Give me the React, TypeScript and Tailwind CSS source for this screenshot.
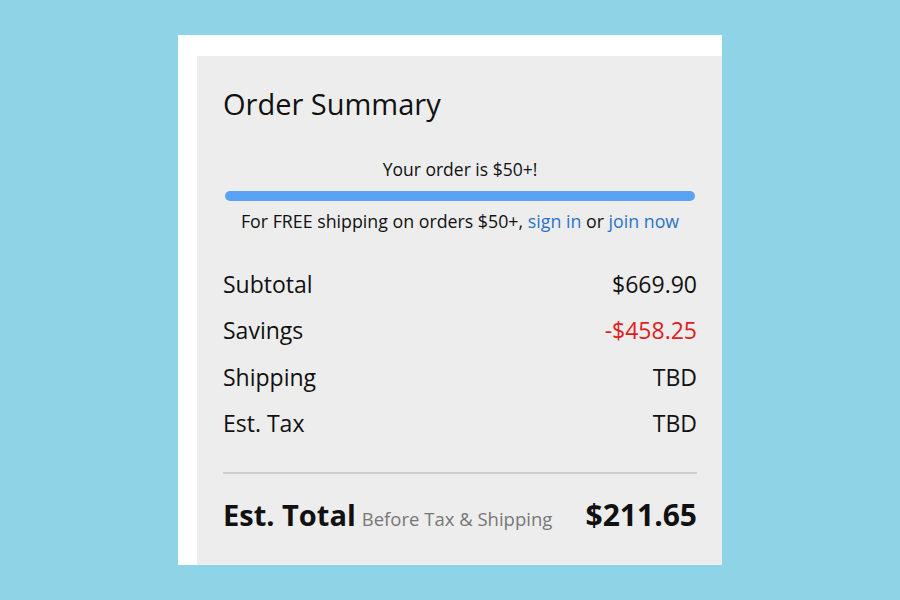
export default function App() {
  const rows = [
    { label: 'Subtotal', value: '$669.90', red: false },
    { label: 'Savings', value: '-$458.25', red: true },
    { label: 'Shipping', value: 'TBD', red: false },
    { label: 'Est. Tax', value: 'TBD', red: false },
  ]

  return (
    <div
      className="w-[900px] h-[600px] bg-[#8fd3e6] flex items-center justify-center text-[#111]"
      style={{ fontFamily: '"Open Sans", "Liberation Sans", sans-serif' }}
    >
      <div className="w-[544px] h-[530px] bg-white pl-[19px] pt-[21px] flex">
        <div className="flex-1 bg-[#ededed] pl-[26px] pr-[25px] pt-[28px] flex flex-col">
          <h2 className="text-[29px] leading-[40px]">Order Summary</h2>

          <div className="mt-[33px] flex flex-col items-center">
            <p className="text-[17.5px] leading-[24px]">Your order is $50+!</p>
            <div className="mt-[10px] w-[470px] h-[10px] rounded-full bg-[#5aa2f6]" />
            <p className="mt-[8px] text-[17.8px] leading-[24px]">
              For FREE shipping on orders $50+,{' '}
              <span className="text-[#2a72c9]">sign in</span> or{' '}
              <span className="text-[#2a72c9]">join now</span>
            </p>
          </div>

          <div className="mt-[28px] flex flex-col">
            {rows.map((r) => (
              <div key={r.label} className="flex justify-between text-[23px] leading-[46.3px]">
                <span>{r.label}</span>
                <span className={r.red ? 'text-[#e0201c]' : ''}>{r.value}</span>
              </div>
            ))}
          </div>

          <div className="mt-[26px] h-[2px] bg-[#cfcfcf]" />

          <div className="mt-[21px] flex items-baseline justify-between">
            <div className="flex items-baseline gap-[6px]">
              <span className="text-[29px] font-bold leading-[40px]">Est. Total</span>
              <span className="text-[18.5px] text-[#777]">Before Tax &amp; Shipping</span>
            </div>
            <span className="text-[30px] font-bold leading-[40px]">$211.65</span>
          </div>
        </div>
      </div>
    </div>
  )
}
